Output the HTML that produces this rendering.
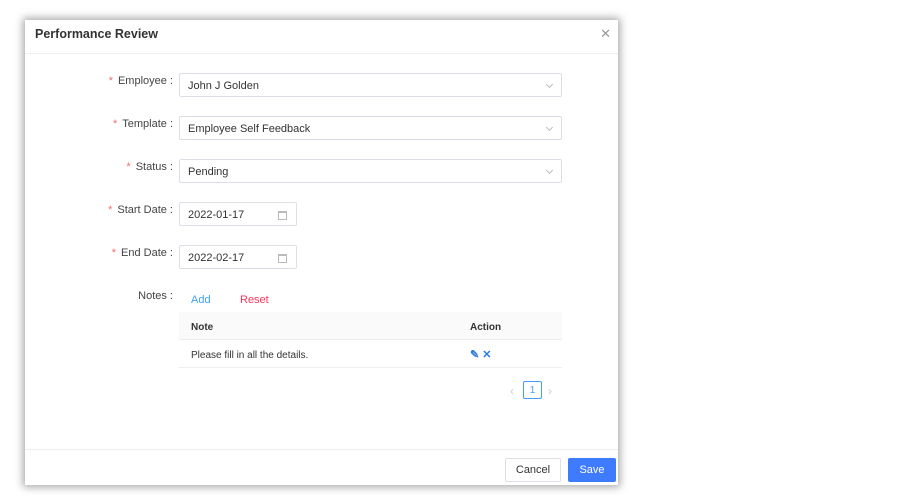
<!DOCTYPE html>
<html><head><style>
*{box-sizing:border-box;margin:0;padding:0}
body{width:900px;height:500px;background:#fff;font-family:"Liberation Sans",Arial,sans-serif;position:relative;overflow:hidden;color:#333}
.modal{position:absolute;left:25px;top:20px;width:593px;height:465px;background:#fff;box-shadow:0 0 8px 2px rgba(0,0,0,.35)}
.hd{height:34px;border-bottom:1px solid #eee;padding:7px 10px;font-size:12.5px;font-weight:bold;color:#333}
.close{position:absolute;right:7px;top:6px;font-size:13px;color:#999}
.lbl{position:absolute;right:445px;font-size:11px;color:#444;text-align:right;white-space:nowrap}
.lbl i{color:#f56c6c;font-style:normal;margin-right:5px}
.inp{position:absolute;left:154px;height:24px;border:1px solid #dcdfe6;border-radius:2px;font-size:11px;padding:6px 8px 0;color:#333}
.chev{position:absolute;right:9px;top:8px;width:5px;height:5px;border-right:1px solid #bbb;border-bottom:1px solid #bbb;transform:rotate(45deg)}
.cal{position:absolute;right:9px;top:8px;width:9px;height:9px;border:1px solid #bbb;border-top-width:2px}
.tbl{position:absolute;left:154px;top:292px;width:383px;font-size:10px}
.th{height:28px;background:#fafafa;border-bottom:1px solid #eee;font-weight:bold;position:relative}
.tr{height:28px;border-bottom:1px solid #eee;position:relative}
.c1{position:absolute;left:12px;top:10px}
.c2{position:absolute;left:291px;top:10px}
.ft{position:absolute;left:0;right:0;top:429px;border-top:1px solid #eee;height:36px}
.btn{position:absolute;top:8px;height:24px;font-size:11px;border-radius:2px;text-align:center;line-height:22px}
</style></head><body>
<div class="modal">
<div class="hd">Performance Review</div>
<div class="close">✕</div>
<div class="lbl" style="top:55px"><i>*</i>Employee :</div>
<div class="inp" style="top:53px;width:383px">John J Golden<span class="chev"></span></div>
<div class="lbl" style="top:98px"><i>*</i>Template :</div>
<div class="inp" style="top:96px;width:383px">Employee Self Feedback<span class="chev"></span></div>
<div class="lbl" style="top:141px"><i>*</i>Status :</div>
<div class="inp" style="top:139px;width:383px">Pending<span class="chev"></span></div>
<div class="lbl" style="top:184px"><i>*</i>Start Date :</div>
<div class="inp" style="top:182px;width:118px">2022-01-17<span class="cal"></span></div>
<div class="lbl" style="top:227px"><i>*</i>End Date :</div>
<div class="inp" style="top:225px;width:118px">2022-02-17<span class="cal"></span></div>
<div class="lbl" style="top:270px">Notes :</div>
<div style="position:absolute;left:166px;top:274px;font-size:11px;color:#409eff">Add</div>
<div style="position:absolute;left:215px;top:274px;font-size:11px;color:#f5365c">Reset</div>
<div class="tbl">
<div class="th"><span class="c1">Note</span><span class="c2">Action</span></div>
<div class="tr"><span class="c1">Please fill in all the details.</span>
<span class="c2" style="color:#2d7be0;font-weight:bold;top:8px;font-size:11px">✎ ✕</span></div>
</div>
<div style="position:absolute;left:485px;top:364px;font-size:12px;color:#ccc">‹</div>
<div style="position:absolute;left:498px;top:361px;width:19px;height:18px;border:1px solid #409eff;border-radius:2px;font-size:10px;color:#409eff;text-align:center;line-height:17px">1</div>
<div style="position:absolute;left:523px;top:364px;font-size:12px;color:#ccc">›</div>
<div class="ft">
<div class="btn" style="left:480px;width:56px;border:1px solid #dcdfe6;color:#333;line-height:23px">Cancel</div>
<div class="btn" style="left:543px;width:48px;background:#3e7bff;color:#fff;border:1px solid #3e7bff;line-height:23px">Save</div>
</div>
</div>
</body></html>
